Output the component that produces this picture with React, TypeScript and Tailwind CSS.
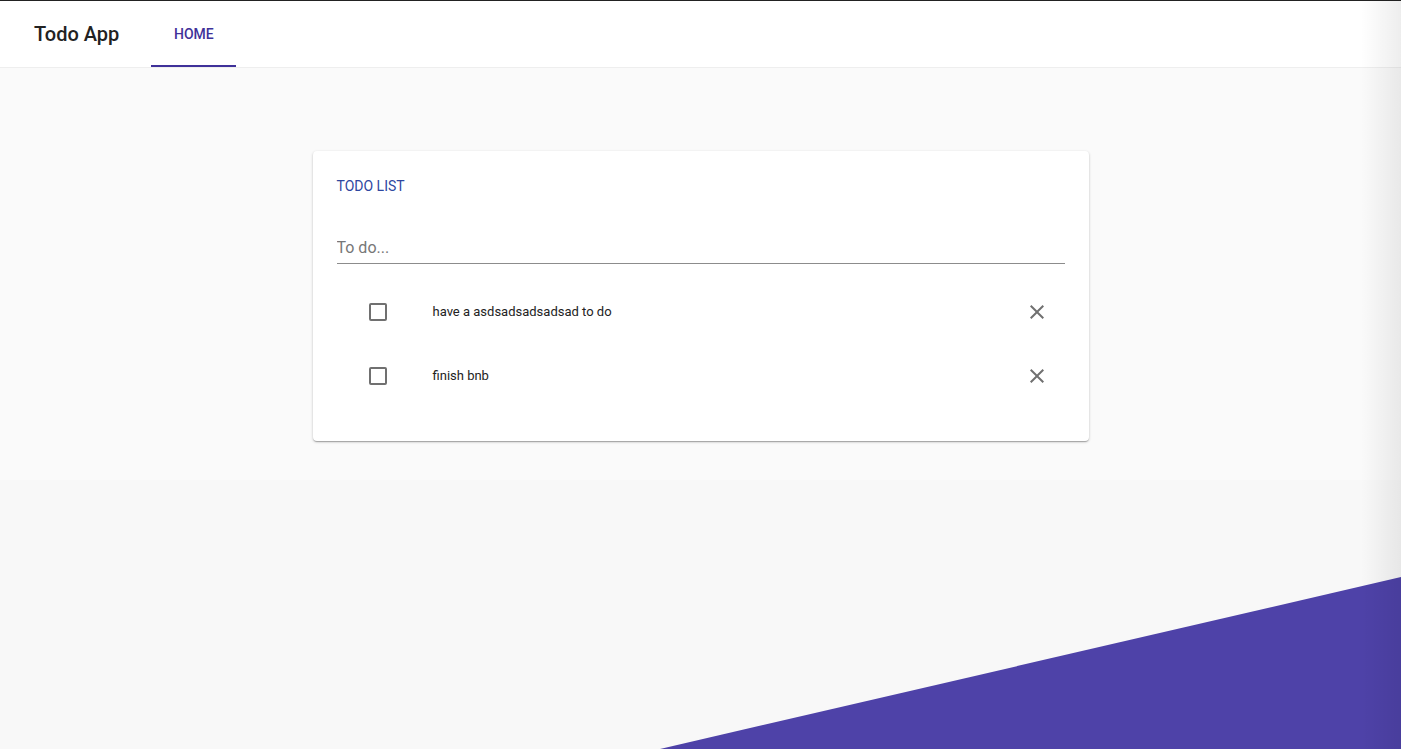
const todos = [
    { id: 1, text: 'have a asdsadsadsadsad to do' },
    { id: 2, text: 'finish bnb' },
];

function CloseIcon() {
    return (
        <svg width="24" height="24" viewBox="0 0 24 24" fill="currentColor">
            <path d="M19 6.41L17.59 5 12 10.59 6.41 5 5 6.41 10.59 12 5 17.59 6.41 19 12 13.41 17.59 19 19 17.59 13.41 12z" />
        </svg>
    );
}

export default function App() {
    return (
        <div className="relative h-[749px] overflow-hidden bg-[#f8f8f8] font-['Roboto','Liberation_Sans',sans-serif]">
            <div className="absolute inset-x-0 top-[68px] h-[412px] bg-[#fafafa]" />
            <svg className="absolute bottom-0 left-0 h-[172px] w-full" viewBox="0 0 1401 172" preserveAspectRatio="none">
                <polygon points="660,172 1401,0 1401,172" fill="#4e42a8" />
            </svg>

            <header className="relative flex h-[68px] items-stretch border-t border-[#222] border-b border-b-[#eeeeee] bg-white">
                <div className="flex items-center pl-[34px] pr-[32px] text-[20px] font-medium text-[#222]">Todo App</div>
                <div className="flex w-[85px] items-center justify-center border-b-2 border-[#3f3199] pt-[2px] text-[14px] font-medium text-[#3f3199]">
                    HOME
                </div>
            </header>

            <main className="relative flex justify-center pt-[83px]">
                <div className="w-[776px] rounded-[4px] bg-white px-6 pt-[25px] pb-[33px] shadow-[0_1px_3px_rgba(0,0,0,0.2),0_1px_1px_rgba(0,0,0,0.14),0_2px_1px_-1px_rgba(0,0,0,0.12)]">
                    <div className="h-5 text-[14px] leading-5 text-[#2f479f]">TODO LIST</div>
                    <div className="mt-[40px] border-b border-[#8c8c8c] pb-[3px]">
                        <input
                            className="w-full text-[16px] leading-[24px] text-[#333] placeholder-[#777] outline-none"
                            placeholder="To do..."
                        />
                    </div>
                    <ul className="mt-[16px]">
                        {todos.map((todo) => (
                            <li key={todo.id} className="flex h-16 items-center">
                                <div className="ml-[32px] h-[18px] w-[18px] rounded-[2px] border-2 border-[#707070]" />
                                <span className="ml-[46px] flex-1 text-[13px] text-[#222]">{todo.text}</span>
                                <button className="mr-[16px] flex h-6 w-6 items-center justify-center text-[#707070]">
                                    <CloseIcon />
                                </button>
                            </li>
                        ))}
                    </ul>
                </div>
            </main>

            <div className="pointer-events-none absolute inset-y-0 right-0 w-[40px] bg-gradient-to-r from-transparent to-black/[0.07]" />
        </div>
    );
}
